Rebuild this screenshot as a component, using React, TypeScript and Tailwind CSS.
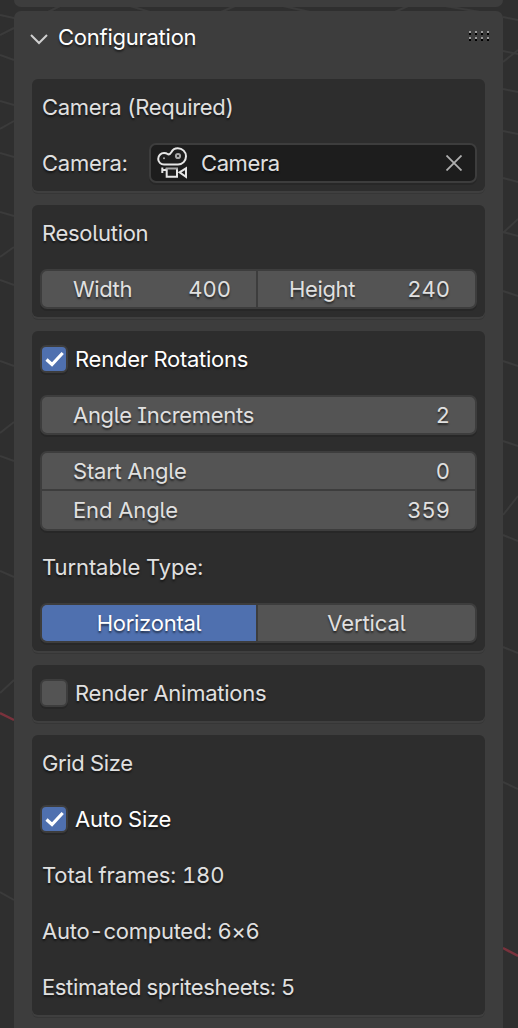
import React from "react";

const fieldFrame = "border-2 border-[#3d3d3d] rounded-[7px] bg-[#545454] shadow-[0_2px_0_#272727] overflow-hidden";

const Viewport = () => (
  <svg className="absolute inset-0" width="518" height="1028" fill="none" stroke="#3b3b3b" strokeWidth="2">
    <path d="M0 15L14 18M0 35L14 28M0 55L14 60M0 101L14 105M0 129L14 121M0 153L14 157M0 212L14 216M0 257L14 247M0 280L14 285M0 361L14 366M0 433L14 422M0 456L14 461M0 571L14 577M0 693L14 680M0 892L14 900" />
    <path d="M503 17L518 20M503 51L518 54M503 62L518 50M503 89L518 92M503 131L518 134M503 178L518 182M503 233L518 219M503 232L518 236M503 291L518 296M503 361L518 366M503 441L518 446M503 515L518 496M503 535L518 541M503 647L518 653M503 782L518 789" />
    <path d="M48 12L60 6M221 12L235 6M283 6L310 12M395 12L408 6M445 6L480 12M130 6L150 12" />
    <path d="M0 713L14 720M503 948L518 956" stroke="#7a323c" strokeWidth="2.5" />
  </svg>
);

const CameraIcon = () => (
  <svg width="32" height="32" viewBox="0 0 32 32" fill="none" stroke="#e6e6e6" strokeWidth="2">
    <path d="M8 17.5C4.7 17.5 2.2 15 2.2 12C2.2 8.6 4.8 6 8 6C9.7 6 11 6.6 12 7.3C13.5 7.7 14.5 6.6 15.3 5.2C16.6 2.8 19 1.3 21.8 1.3C26.4 1.3 30 4.9 30 9.3C30 13.8 26.5 17.5 22 17.5Z" />
    <circle cx="22" cy="9" r="2.1" stroke="#a8a8a8" />
    <circle cx="8" cy="11.3" r="1" fill="#a8a8a8" stroke="none" />
    <path d="M6.3 20.5V26M6.3 23H10" />
    <path d="M10.7 21V29.8H21V21" />
    <path d="M9.7 21.5H22" stroke="#a8a8a8" />
    <path d="M23.5 25.3L30 21.3V29.8Z" />
  </svg>
);

const Box = ({ children }: { children: React.ReactNode }) => (
  <section className="rounded-[6px] bg-[#2d2d2d] px-2 shadow-[0_2px_0_#3f3f3f,0_3px_0_#363636]">{children}</section>
);

const Label = ({ children, className = "" }: { children: React.ReactNode; className?: string }) => (
  <div className={`flex h-14 items-center pl-[2px] ${className}`}>{children}</div>
);

const Checkbox = ({ label, checked = false }: { label: string; checked?: boolean }) => (
  <div className="flex h-14 items-center gap-[7px]">
    <span
      className={`flex size-7 items-center justify-center rounded-[6px] border-2 border-[#3d3d3d] shadow-[0_2px_0_#272727] ${
        checked ? "bg-[#4f70af]" : "bg-[#545454]"
      }`}
    >
      {checked && (
        <svg className="shrink-0" width="24" height="24" fill="none" stroke="#ffffff" strokeWidth="3.2">
          <path d="M4.5 12.5L10 17.5L20.7 6" />
        </svg>
      )}
    </span>
    <span className={checked ? "text-white" : ""}>{label}</span>
  </div>
);

const NumberField = ({ label, value, className = "" }: { label: string; value: number; className?: string }) => (
  <div className="flex items-center justify-between pl-[31px] pr-[25px]">
    <span className={className}>{label}</span>
    <span className="tracking-normal">{value}</span>
  </div>
);

const App = () => {
  return (
    <div className="relative h-[1028px] w-[518px] overflow-hidden bg-[#2f2f2f] font-['Inter',sans-serif] text-[22px] leading-7 tracking-[-0.25px] text-[#e0e0e0] [font-feature-settings:'tnum','cv05','cv08'] [text-shadow:0_2px_2px_rgba(0,0,0,0.55)]">
      <Viewport />
      <div className="relative flex h-full flex-col gap-1 pl-[14px] pr-[15px]">
        <div className="h-[7px] shrink-0 rounded-b-[7px] bg-[#3d3d3d]" />

        <main className="flex-1 rounded-t-[7px] bg-[#3d3d3d] px-[18px]">
          <header className="-ml-[2px] mb-4 flex h-[52px] items-center text-white">
            <svg width="18" height="18" fill="none" stroke="#d0d0d0" strokeWidth="2">
              <path d="M1 7L9 15L17 7" />
            </svg>
            <span className="ml-[10px]">Configuration</span>
            <div className="-mr-[4px] -mt-[2px] ml-auto grid grid-cols-4 gap-x-1 gap-y-[2px]">
              {[0, 1, 2, 3, 4, 5, 6, 7].map((dot) => (
                <span key={dot} className="h-1 w-[2px] border-t-2 border-[#999999] bg-black" />
              ))}
            </div>
          </header>

          <div className="flex flex-col gap-[14px]">
            <Box>
              <Label className="tracking-[-0.3px]">Camera (Required)</Label>
              <div className="flex h-14 items-center">
                <span className="w-[109px] pl-[2px]">Camera:</span>
                <div className="flex h-10 flex-1 items-center rounded-[7px] border-2 border-[#3d3d3d] bg-[#1d1d1d] pl-[5px] pr-[13px] shadow-[0_2px_0_#272727]">
                  <CameraIcon />
                  <span className="ml-[13px] tracking-[-0.4px]">Camera</span>
                  <svg className="ml-auto" width="16" height="16" stroke="#b0b0b0" strokeWidth="1.8">
                    <path d="M0.5 0.5L15.5 15.5M15.5 0.5L0.5 15.5" />
                  </svg>
                </div>
              </div>
            </Box>

            <Box>
              <Label className="tracking-[-0.3px]">Resolution</Label>
              <div className="h-14 py-2">
                <div className={`grid h-10 grid-cols-[216px_1fr] divide-x-2 divide-[#3d3d3d] ${fieldFrame}`}>
                  <NumberField label="Width" value={400} className="tracking-[-0.4px]" />
                  <NumberField label="Height" value={240} className="tracking-[-0.35px]" />
                </div>
              </div>
            </Box>

            <Box>
              <Checkbox label="Render Rotations" checked />
              <div className="h-14 py-2">
                <div className={`grid h-10 ${fieldFrame}`}>
                  <NumberField label="Angle Increments" value={2} className="tracking-[-0.3px]" />
                </div>
              </div>
              <div className="py-2">
                <div className={`grid h-20 grid-rows-2 divide-y-2 divide-[#3d3d3d] ${fieldFrame}`}>
                  <NumberField label="Start Angle" value={0} className="tracking-[-0.2px]" />
                  <NumberField label="End Angle" value={359} className="tracking-[-0.1px]" />
                </div>
              </div>
              <Label className="tracking-[-0.08px]">Turntable Type:</Label>
              <div className="h-14 py-2">
                <div className={`grid h-10 grid-cols-[216px_1fr] divide-x-2 divide-[#3d3d3d] ${fieldFrame}`}>
                  <div className="flex items-center justify-center bg-[#4f70af] text-white">Horizontal</div>
                  <div className="flex items-center justify-center tracking-[-0.1px]">Vertical</div>
                </div>
              </div>
            </Box>

            <Box>
              <Checkbox label="Render Animations" />
            </Box>

            <Box>
              <Label className="tracking-[-0.35px]">Grid Size</Label>
              <Checkbox label="Auto Size" checked />
              <Label className="tracking-[-0.12px]">Total frames: 180</Label>
              <Label>Auto-computed: 6×6</Label>
              <Label className="tracking-[-0.36px]">Estimated spritesheets: 5</Label>
            </Box>
          </div>
        </main>
      </div>
    </div>
  );
};

export default App;
